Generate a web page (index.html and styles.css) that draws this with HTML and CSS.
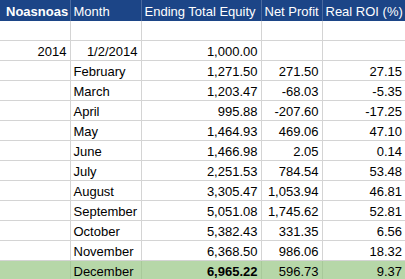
FILE: index.html
```html
<!DOCTYPE html>
<html>
<head>
<meta charset="utf-8">
<link rel="stylesheet" href="styles.css">
</head>
<body>
<table class="sheet">
  <colgroup>
    <col class="c0"><col class="c1"><col class="c2"><col class="c3"><col class="c4">
  </colgroup>
  <thead>
    <tr class="head">
      <th class="b">Noasnoas</th><th>Month</th><th>Ending Total Equity</th><th>Net Profit</th><th>Real ROI (%)</th>
    </tr>
  </thead>
  <tbody>
    <tr><td></td><td></td><td></td><td></td><td></td></tr>
    <tr><td class="r">2014</td><td class="r">1/2/2014</td><td class="r">1,000.00</td><td></td><td></td></tr>
    <tr><td></td><td>February</td><td class="r">1,271.50</td><td class="r">271.50</td><td class="r">27.15</td></tr>
    <tr><td></td><td>March</td><td class="r">1,203.47</td><td class="r">-68.03</td><td class="r">-5.35</td></tr>
    <tr><td></td><td>April</td><td class="r">995.88</td><td class="r">-207.60</td><td class="r">-17.25</td></tr>
    <tr><td></td><td>May</td><td class="r">1,464.93</td><td class="r">469.06</td><td class="r">47.10</td></tr>
    <tr><td></td><td>June</td><td class="r">1,466.98</td><td class="r">2.05</td><td class="r">0.14</td></tr>
    <tr><td></td><td>July</td><td class="r">2,251.53</td><td class="r">784.54</td><td class="r">53.48</td></tr>
    <tr><td></td><td>August</td><td class="r">3,305.47</td><td class="r">1,053.94</td><td class="r">46.81</td></tr>
    <tr><td></td><td>September</td><td class="r">5,051.08</td><td class="r">1,745.62</td><td class="r">52.81</td></tr>
    <tr><td></td><td>October</td><td class="r">5,382.43</td><td class="r">331.35</td><td class="r">6.56</td></tr>
    <tr><td></td><td>November</td><td class="r">6,368.50</td><td class="r">986.06</td><td class="r">18.32</td></tr>
    <tr class="total"><td></td><td>December</td><td class="r b">6,965.22</td><td class="r">596.73</td><td class="r">9.37</td></tr>
  </tbody>
</table>
</body>
</html>
```
FILE: styles.css
```css
html, body {
  margin: 0;
  padding: 0;
  background: #ffffff;
}
.sheet {
  border-collapse: collapse;
  table-layout: fixed;
  width: 405px;
  font-family: "Liberation Sans", Arial, sans-serif;
  font-size: 13px;
  color: #000000;
}
.c0 { width: 70px; }
.c1 { width: 71px; }
.c2 { width: 120px; }
.c3 { width: 61px; }
.c4 { width: 83px; }

.sheet th,
.sheet td {
  padding: 2px 3px 0 3px;
  height: 17px;
  line-height: 17px;
  white-space: nowrap;
  overflow: hidden;
  text-align: left;
  border-right: 1px solid #d4d4d4;
  border-bottom: 1px solid #d4d4d4;
  box-sizing: content-box;
  vertical-align: top;
}
.sheet th:last-child,
.sheet td:last-child {
  border-right: none;
}
.head th {
  background: #1c4587;
  color: #ffffff;
  font-weight: normal;
  height: 18px;
  line-height: 19px;
  padding-top: 2px;
  border-bottom: none;
  border-right: 1px solid #4a6aa0;
}
.head th:first-child {
  padding-left: 6px;
}
.head th.b,
.b {
  font-weight: bold;
}
.r {
  text-align: right !important;
}
.total td {
  background: #b6d7a8;
  border-right-color: #a8c99a;
  border-bottom: none;
}
```
